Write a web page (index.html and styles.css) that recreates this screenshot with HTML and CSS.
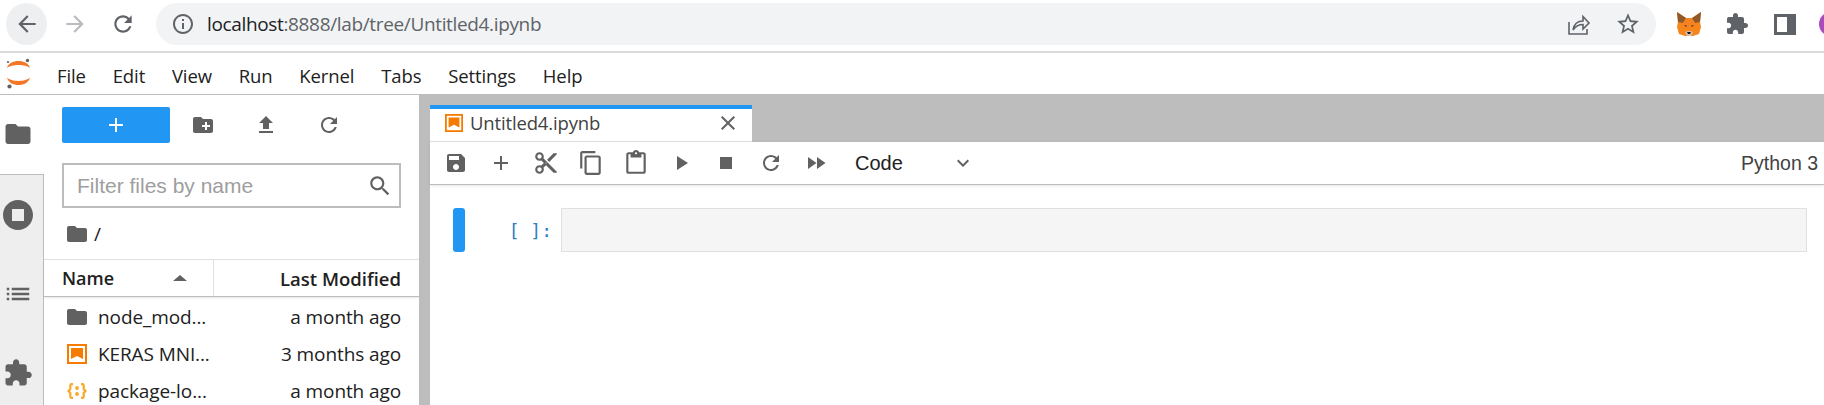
FILE: index.html
```html
<!DOCTYPE html>
<html lang="en">
<head>
    <meta charset="UTF-8">
    <title>JupyterLab</title>
    <link rel="stylesheet" href="styles.css">
</head>
<body>
<div class="browser-bar">
    <div class="nav-btn hover"><svg class="ic-26" viewBox="0 0 24 24"><path d="M20 11H7.83l5.59-5.59L12 4l-8 8 8 8 1.41-1.41L7.83 13H20v-2z"/></svg></div>
    <div class="nav-btn off"><svg class="ic-26" viewBox="0 0 24 24"><path d="M12 4l-1.41 1.41L16.17 11H4v2h12.17l-5.58 5.59L12 20l8-8z"/></svg></div>
    <div class="nav-btn"><svg class="ic-26" viewBox="0 0 24 24"><path d="M17.65 6.35C16.2 4.9 14.21 4 12 4c-4.42 0-7.99 3.58-7.99 8s3.57 8 7.99 8c3.73 0 6.84-2.55 7.73-6h-2.08c-.82 2.33-3.04 4-5.65 4-3.31 0-6-2.69-6-6s2.69-6 6-6c1.66 0 3.14.69 4.22 1.78L13 11h7V4l-2.35 2.35z"/></svg></div>
    <div class="address">
        <svg class="ic-24" viewBox="0 0 24 24"><path d="M11 7h2v2h-2zm0 4h2v6h-2zm1-9C6.48 2 2 6.48 2 12s4.48 10 10 10 10-4.48 10-10S17.52 2 12 2zm0 18c-4.41 0-8-3.59-8-8s3.59-8 8-8 8 3.59 8 8-3.59 8-8 8z"/></svg>
        <span class="url"><b>localhost</b>:8888/lab/tree/Untitled4.ipynb</span>
        <svg class="share" viewBox="0 0 24 24"><path d="M2 10v12h18v-5M6 18c1-6 5-9 10-9V4.500l6 6.500-6 6v-4.500c-4 0-7 1-10 5.500z"/></svg>
        <svg class="star" viewBox="0 0 24 24"><path d="M22 9.24l-7.19-.62L12 2 9.190 8.630 2 9.240l5.460 4.730L5.820 21 12 17.270 18.180 21l-1.630-7.030L22 9.240zM12 15.400l-3.760 2.270 1-4.280-3.320-2.880 4.380-.38L12 6.100l1.710 4.040 4.380.38-3.320 2.880 1 4.280L12 15.400z"/></svg>
    </div>
    <svg class="fox" viewBox="0 0 24 24">
        <path fill="#f6851b" d="M0 0l9 6h6l9-6-1 10 1 5-2 7-6 2H8l-6-2-2-7 1-5z"/>
        <path fill="#8f5a2a" d="M0 0l9 6-3 5-5-1zM24 0l-9 6 3 5 5-1z"/>
        <path fill="#f58220" d="M6 11l3-4h6l3 4-3 5H9z"/>
        <path fill="#5c3a1e" d="M7 13l3 .500-1 1.500zM17 13l-3 .500 1 1.500z"/>
        <path fill="#d7c1b3" d="M8 20l3-1h2l3 1-2 4h-4z"/>
        <path fill="#161616" d="M10 20h4l-1 2h-2z"/>
    </svg>
    <svg class="puzzle" viewBox="0 0 24 24"><path d="M20.500 11H19V7c0-1.100-.9-2-2-2h-4V3.500C13 2.120 11.880 1 10.500 1S8 2.120 8 3.500V5H4c-1.100 0-1.990.9-1.990 2v3.800H3.500c1.490 0 2.700 1.210 2.700 2.700s-1.210 2.700-2.700 2.700H2V20c0 1.100.9 2 2 2h3.800v-1.500c0-1.490 1.210-2.700 2.700-2.700 1.490 0 2.700 1.210 2.700 2.700V22H17c1.100 0 2-.9 2-2v-4h1.500c1.380 0 2.500-1.120 2.500-2.500S21.880 11 20.500 11z"/></svg>
    <div class="side-toggle"></div>
    <div class="avatar"></div>
</div>

<div class="menu-bar">
    <svg class="logo" viewBox="0 0 27 31">
        <path fill="#f37726" d="M2 10C4 .7 23 .7 25 10 21 6 6 6 2 10zM2 19.500C6 24 21 24 25 19.500 23 29.500 4 29.500 2 19.500z"/>
        <circle cx="22.500" cy="2.500" r="1.700" fill="#616161"/>
        <circle cx="3" cy="4" r="1.100" fill="#616161"/>
        <circle cx="4.500" cy="28.500" r="2.100" fill="#616161"/>
    </svg>
    <span class="menu-item">File</span>
    <span class="menu-item">Edit</span>
    <span class="menu-item">View</span>
    <span class="menu-item">Run</span>
    <span class="menu-item">Kernel</span>
    <span class="menu-item">Tabs</span>
    <span class="menu-item">Settings</span>
    <span class="menu-item">Help</span>
</div>

<div class="main">
    <div class="rail">
        <div class="rail-active"><svg class="ic-30" viewBox="0 0 24 24"><path d="M10 4H4c-1.100 0-1.990.9-1.990 2L2 18c0 1.100.9 2 2 2h16c1.100 0 2-.9 2-2V8c0-1.100-.9-2-2-2h-8l-2-2z"/></svg></div>
        <div class="rail-rest">
            <div class="rail-tab"><svg class="ic-36" viewBox="0 0 24 24"><path d="M12 2C6.480 2 2 6.480 2 12s4.480 10 10 10 10-4.480 10-10S17.520 2 12 2zm4 14H8V8h8v8z"/></svg></div>
            <div class="rail-tab"><svg class="ic-30" viewBox="0 0 24 24"><path d="M3 13h2v-2H3v2zm0 4h2v-2H3v2zm0-8h2V7H3v2zm4 4h14v-2H7v2zm0 4h14v-2H7v2zM7 7v2h14V7H7z"/></svg></div>
            <div class="rail-tab"><svg class="ic-30" viewBox="0 0 24 24"><path d="M20.500 11H19V7c0-1.100-.9-2-2-2h-4V3.500C13 2.120 11.880 1 10.500 1S8 2.120 8 3.500V5H4c-1.100 0-1.990.9-1.990 2v3.800H3.500c1.490 0 2.700 1.210 2.700 2.700s-1.210 2.700-2.700 2.700H2V20c0 1.100.9 2 2 2h3.800v-1.500c0-1.490 1.210-2.700 2.700-2.700 1.490 0 2.700 1.210 2.700 2.700V22H17c1.100 0 2-.9 2-2v-4h1.500c1.380 0 2.500-1.120 2.500-2.500S21.880 11 20.500 11z"/></svg></div>
        </div>
    </div>

    <div class="panel">
        <div class="panel-tools">
            <div class="new-btn"><svg class="ic-24" viewBox="0 0 24 24"><path d="M19 13h-6v6h-2v-6H5v-2h6V5h2v6h6v2z"/></svg></div>
            <div class="tool-btn"><svg class="ic-24" viewBox="0 0 24 24"><path d="M20 6h-8l-2-2H4c-1.110 0-1.990.89-1.990 2L2 18c0 1.110.89 2 2 2h16c1.110 0 2-.89 2-2V8c0-1.110-.89-2-2-2zm-1 8h-3v3h-2v-3h-3v-2h3V9h2v3h3v2z"/></svg></div>
            <div class="tool-btn"><svg class="ic-24" viewBox="0 0 24 24"><path d="M9 16h6v-6h4l-7-7-7 7h4zm-4 2h14v2H5z"/></svg></div>
            <div class="tool-btn"><svg class="ic-24" viewBox="0 0 24 24"><path d="M17.650 6.350C16.200 4.900 14.210 4 12 4c-4.420 0-7.990 3.580-7.990 8s3.570 8 7.990 8c3.730 0 6.840-2.550 7.730-6h-2.080c-.82 2.330-3.040 4-5.650 4-3.310 0-6-2.690-6-6s2.690-6 6-6c1.660 0 3.140.69 4.220 1.780L13 11h7V4l-2.350 2.350z"/></svg></div>
        </div>
        <div class="filter">
            <span class="filter-text">Filter files by name</span>
            <svg class="ic-26" viewBox="0 0 24 24"><path d="M15.500 14h-.79l-.28-.27C15.410 12.590 16 11.110 16 9.500 16 5.910 13.090 3 9.500 3S3 5.910 3 9.500 5.910 16 9.500 16c1.610 0 3.090-.59 4.230-1.570l.27.28v.79l5 4.990L20.490 19l-4.990-5zm-6 0C7.010 14 5 11.990 5 9.500S7.010 5 9.500 5 14 7.010 14 9.500 11.990 14 9.500 14z"/></svg>
        </div>
        <div class="crumbs">
            <svg class="folder" viewBox="0 0 20 16"><path d="M8 0H2C.9 0 0 .9 0 2v12c0 1.100.9 2 2 2h16c1.100 0 2-.9 2-2V4c0-1.100-.9-2-2-2h-8z"/></svg>
            <span class="slash">/</span>
        </div>
        <div class="list-head">
            <div class="col-name">Name<span class="caret"></span></div>
            <div class="col-date">Last Modified</div>
        </div>
        <div class="file-list">
            <div class="file-row">
                <svg class="folder" viewBox="0 0 20 16"><path d="M8 0H2C.9 0 0 .9 0 2v12c0 1.100.9 2 2 2h16c1.100 0 2-.9 2-2V4c0-1.100-.9-2-2-2h-8z"/></svg>
                <span class="file-name">node_mod...</span>
                <span class="file-date">a month ago</span>
            </div>
            <div class="file-row">
                <svg class="nb-icon" viewBox="0 0 20 20"><rect x="1" y="1" width="18" height="18" fill="#fff" stroke="#f57c00" stroke-width="2"/><path fill="#f57c00" d="M4 4h12v11l-6-3-6 3z"/></svg>
                <span class="file-name">KERAS MNI...</span>
                <span class="file-date">3 months ago</span>
            </div>
            <div class="file-row">
                <svg class="json-icon" viewBox="0 0 20 16"><path d="M6 1.200H4.500C3.300 1.200 3.300 2 3.300 3v3L1.500 8l1.800 2v3c0 1 0 1.800 1.200 1.800H6M14 1.200h1.500c1.200 0 1.200.8 1.200 1.800v3l1.800 2-1.800 2v3c0 1 0 1.800-1.200 1.800H14"/><circle cx="10" cy="5" r="1.900"/><circle cx="10" cy="11" r="1.900"/></svg>
                <span class="file-name">package-lo...</span>
                <span class="file-date">a month ago</span>
            </div>
        </div>
    </div>

    <div class="splitter"></div>

    <div class="dock">
        <div class="tab-bar">
            <div class="tab">
                <svg class="nb-icon" viewBox="0 0 20 20"><rect x="1" y="1" width="18" height="18" fill="#fff" stroke="#f57c00" stroke-width="2"/><path fill="#f57c00" d="M4 4h12v11l-6-3-6 3z"/></svg>
                <span class="tab-title">Untitled4.ipynb</span>
                <svg class="ic-24" viewBox="0 0 24 24"><path d="M19 6.410 17.590 5 12 10.590 6.410 5 5 6.410 10.590 12 5 17.590 6.410 19 12 13.410 17.590 19 19 17.590 13.410 12z"/></svg>
            </div>
        </div>
        <div class="nb-tools">
            <div class="nb-btn"><svg class="ic-24" viewBox="0 0 24 24"><path d="M17 3H5c-1.110 0-2 .9-2 2v14c0 1.100.89 2 2 2h14c1.100 0 2-.9 2-2V7l-4-4zm-5 16c-1.660 0-3-1.340-3-3s1.340-3 3-3 3 1.340 3 3-1.340 3-3 3zm3-10H5V5h10v4z"/></svg></div>
            <div class="nb-btn"><svg class="ic-24" viewBox="0 0 24 24"><path d="M19 13h-6v6h-2v-6H5v-2h6V5h2v6h6v2z"/></svg></div>
            <div class="nb-btn"><svg class="ic-26" viewBox="0 0 24 24"><path d="M9.640 7.640c.23-.5.36-1.050.36-1.640 0-2.210-1.790-4-4-4S2 3.790 2 6s1.790 4 4 4c.59 0 1.140-.13 1.640-.36L10 12l-2.360 2.360C7.140 14.130 6.590 14 6 14c-2.210 0-4 1.790-4 4s1.790 4 4 4 4-1.790 4-4c0-.59-.13-1.140-.36-1.640L12 14l7 7h3v-1L9.640 7.640zM6 8c-1.100 0-2-.89-2-2s.9-2 2-2 2 .89 2 2-.9 2-2 2zm0 12c-1.100 0-2-.89-2-2s.9-2 2-2 2 .89 2 2-.9 2-2 2zm6-7.500c-.28 0-.5-.22-.5-.5s.22-.5.5-.5.5.22.5.5-.22.5-.5.5zM19 3l-6 6 2 2 7-7V3z"/></svg></div>
            <div class="nb-btn"><svg class="ic-26" viewBox="0 0 24 24"><path d="M16 1H4c-1.100 0-2 .9-2 2v14h2V3h12V1zm3 4H8c-1.100 0-2 .9-2 2v14c0 1.100.9 2 2 2h11c1.100 0 2-.9 2-2V7c0-1.100-.9-2-2-2zm0 16H8V7h11v14z"/></svg></div>
            <div class="nb-btn"><svg class="ic-26" viewBox="0 0 24 24"><path d="M19 2h-4.180C14.400.84 13.300 0 12 0c-1.300 0-2.400.84-2.820 2H5c-1.100 0-2 .9-2 2v16c0 1.100.9 2 2 2h14c1.100 0 2-.9 2-2V4c0-1.100-.9-2-2-2zm-7 0c.55 0 1 .45 1 1s-.45 1-1 1-1-.45-1-1 .45-1 1-1zm7 18H5V4h2v3h10V4h2v16z"/></svg></div>
            <div class="nb-btn"><svg class="ic-24" viewBox="0 0 24 24"><path d="M8 5v14l11-7z"/></svg></div>
            <div class="nb-btn"><svg class="ic-24" viewBox="0 0 24 24"><path d="M6 6h12v12H6z"/></svg></div>
            <div class="nb-btn"><svg class="ic-24" viewBox="0 0 24 24"><path d="M17.650 6.350C16.200 4.900 14.210 4 12 4c-4.420 0-7.990 3.580-7.990 8s3.570 8 7.990 8c3.730 0 6.840-2.550 7.730-6h-2.080c-.82 2.330-3.040 4-5.650 4-3.310 0-6-2.690-6-6s2.690-6 6-6c1.660 0 3.140.69 4.220 1.780L13 11h7V4l-2.350 2.350z"/></svg></div>
            <div class="nb-btn"><svg class="ic-24" viewBox="0 0 24 24"><path d="M4 18l8.500-6L4 6v12zm9-12v12l8.500-6L13 6z"/></svg></div>
            <span class="cell-type">Code</span>
            <svg class="chevron" viewBox="0 0 24 24"><path d="M16.590 8.590 12 13.170 7.410 8.590 6 10l6 6 6-6z"/></svg>
            <span class="kernel">Python 3</span>
        </div>
        <div class="cell">
            <div class="collapser"></div>
            <div class="prompt">[ ]:</div>
            <div class="cell-input"></div>
        </div>
    </div>
</div>
</body>
</html>
```

FILE: styles.css
```css
* {
    margin: 0;
    padding: 0;
    box-sizing: border-box;
}

html, body {
    width: 1824px;
    height: 405px;
    overflow: hidden;
}

body {
    background-color: #fff;
    color: #212121;
    font-family: "Open Sans", "Noto Sans", sans-serif;
}

svg {
    display: block;
    flex: none;
    fill: #616161;
}

.ic-24 { width: 24px; height: 24px; }
.ic-26 { width: 26px; height: 26px; }
.ic-30 { width: 30px; height: 30px; }
.ic-36 { width: 36px; height: 36px; }

/* browser bar */
.browser-bar {
    height: 53px;
    padding: 3px 0 6px 6px;
    display: flex;
    align-items: center;
    border-bottom: 2px solid #dadada;
    overflow: hidden;
}

.nav-btn {
    width: 41px;
    height: 42px;
    margin-right: 7px;
    flex: none;
    border-radius: 50%;
    display: flex;
    align-items: center;
    justify-content: center;
}

.nav-btn svg {
    fill: #5f6368;
}

.nav-btn.hover {
    background-color: #eeeff1;
}

.nav-btn.off svg {
    fill: #b9bbbe;
}

.address {
    width: 1500px;
    height: 42px;
    flex: none;
    margin-left: 6px;
    padding-left: 15px;
    border-radius: 21px;
    background-color: #f1f3f4;
    display: flex;
    align-items: center;
}

.address svg {
    fill: #5f6368;
}

.url {
    margin-left: 12px;
    font-size: 19px;
    letter-spacing: -0.35px;
    color: #5f6368;
}

.url b {
    font-weight: 400;
    color: #202124;
}

.share {
    width: 24px;
    height: 24px;
    margin-left: auto;
    fill: none !important;
    stroke: #5f6368;
    stroke-width: 1.6;
}

.star {
    width: 26px;
    height: 26px;
    margin-left: 24px;
    margin-right: 15px;
}

.fox {
    width: 24px;
    height: 24px;
    margin-left: 21px;
}

.puzzle {
    width: 24px;
    height: 24px;
    margin-left: 24px;
    fill: #5f6368;
}

.side-toggle {
    width: 22px;
    height: 21px;
    margin-left: 25px;
    flex: none;
    border: 3px solid #5f6368;
    border-right-width: 9px;
}

.avatar {
    width: 24px;
    height: 24px;
    margin-left: 23px;
    flex: none;
    border-radius: 50%;
    background-color: #a94bbd;
}

/* menu */
.menu-bar {
    height: 41px;
    padding-left: 5px;
    display: flex;
    align-items: center;
    font-size: 18.5px;
}

.logo {
    width: 27px;
    height: 31px;
    margin-right: 12px;
}

.menu-item {
    padding: 3px 13.4px 0;
    letter-spacing: -0.1px;
}

.menu-item:first-of-type {
    padding-left: 13px;
}

/* main area */
.main {
    height: 311px;
    display: flex;
    border-top: 1px solid #bdbdbd;
}

.rail {
    width: 44px;
    flex: none;
    display: flex;
    flex-direction: column;
}

.rail-active {
    height: 79px;
    flex: none;
    padding: 24px 0 0 3px;
}

.rail-rest {
    flex: 1;
    min-height: 0;
    overflow: hidden;
    background-color: #eee;
    border-top: 1px solid #bdbdbd;
    border-right: 1px solid #bdbdbd;
}

.rail-tab {
    height: 79px;
    padding-left: 3px;
    display: flex;
    align-items: center;
}

.rail-tab .ic-36 {
    margin-left: -3px;
}

.panel {
    width: 375px;
    flex: none;
    display: flex;
    flex-direction: column;
    padding-top: 12px;
}

.panel > div {
    flex: none;
}

.panel-tools {
    height: 36px;
    padding-left: 18px;
    display: flex;
    align-items: center;
}

.new-btn {
    width: 108px;
    height: 36px;
    margin-right: 1px;
    border-radius: 2px;
    background-color: #2196f3;
    display: flex;
    align-items: center;
    justify-content: center;
}

.new-btn svg {
    fill: #fff;
}

.tool-btn {
    width: 63px;
    display: flex;
    justify-content: center;
}

.filter {
    width: 339px;
    height: 45px;
    margin: 20px 0 0 18px;
    padding: 1px 6px 0 13px;
    border: 2px solid #bdbdbd;
    display: flex;
    align-items: center;
    justify-content: space-between;
}

.filter-text {
    font-family: "Liberation Sans", sans-serif;
    font-size: 21px;
    color: #9e9e9e;
}

.crumbs {
    height: 51px;
    padding-left: 23px;
    display: flex;
    align-items: center;
}

.folder {
    width: 20px;
    height: 16px;
}

.slash {
    margin-left: 7px;
    font-size: 19px;
}

.list-head {
    height: 38px;
    display: flex;
    align-items: center;
    border-top: 1px solid #e0e0e0;
    border-bottom: 1px solid #bdbdbd;
    box-shadow: 0 1px 2px rgba(0, 0, 0, 0.1);
    font-size: 18px;
    font-weight: 600;
}

.col-name {
    width: 170px;
    height: 100%;
    padding-left: 18px;
    display: flex;
    align-items: center;
    border-right: 1px solid #e0e0e0;
}

.caret {
    margin-left: 59px;
    border-left: 7px solid transparent;
    border-right: 7px solid transparent;
    border-bottom: 6px solid #616161;
}

.col-date {
    flex: 1;
    padding-right: 18px;
    font-size: 18.5px;
    text-align: right;
}

.file-list {
    padding-top: 1px;
}

.file-row {
    height: 37px;
    padding: 0 18px 0 23px;
    display: flex;
    align-items: center;
    font-size: 19px;
    letter-spacing: -0.1px;
}

.nb-icon {
    width: 20px;
    height: 20px;
}

.json-icon {
    width: 20px;
    height: 16px;
    fill: #f9a825;
}

.json-icon path {
    fill: none;
    stroke: #f9a825;
    stroke-width: 2.2;
}

.file-name {
    margin-left: 11px;
}

.file-date {
    margin-left: auto;
}

.splitter {
    width: 11px;
    flex: none;
    background-color: #bdbdbd;
}

/* notebook */
.dock {
    flex: 1;
    min-width: 0;
}

.tab-bar {
    height: 47px;
    padding-top: 10px;
    background-color: #bdbdbd;
}

.tab {
    width: 322px;
    height: 37px;
    padding: 0 12px 5px 15px;
    display: flex;
    align-items: center;
    background-color: #fff;
    border-top: 4px solid #2196f3;
    border-bottom: 1px solid #e0e0e0;
}

.tab .ic-24 {
    margin-left: auto;
}

.tab .nb-icon {
    width: 18px;
    height: 18px;
}

.tab-title {
    margin-left: 7px;
    font-size: 18.5px;
    letter-spacing: -0.15px;
    color: #424242;
}

.nb-tools {
    height: 43px;
    padding: 0 6px 0 3px;
    display: flex;
    align-items: center;
    border-bottom: 1px solid #bdbdbd;
    box-shadow: 0 1px 3px rgba(0, 0, 0, 0.1);
    font-family: "Liberation Sans", sans-serif;
    font-size: 19.5px;
}

.nb-btn {
    width: 45px;
    display: flex;
    justify-content: center;
}

.cell-type {
    margin-left: 17px;
    font-size: 20px;
    color: #212121;
}

.chevron {
    width: 24px;
    height: 24px;
    margin-left: 48px;
}

.kernel {
    margin-left: auto;
    color: #424242;
}

.cell {
    height: 44px;
    margin: 23px 17px 0 23px;
    display: flex;
    align-items: stretch;
}

.collapser {
    width: 12px;
    border-radius: 3px;
    background-color: #2196f3;
}

.prompt {
    width: 96px;
    padding-right: 9px;
    font-family: "DejaVu Sans Mono", monospace;
    font-size: 18px;
    line-height: 46px;
    text-align: right;
    color: #307fc1;
}

.cell-input {
    flex: 1;
    background-color: #f5f5f5;
    border: 1px solid #e0e0e0;
}
```
